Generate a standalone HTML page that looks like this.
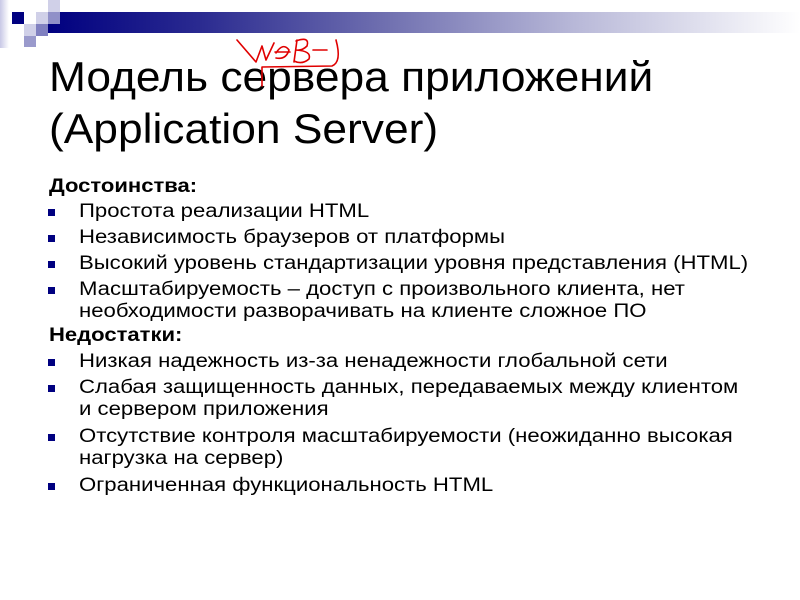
<!DOCTYPE html>
<html><head><meta charset="utf-8"><style>
html,body{margin:0;padding:0;width:800px;height:600px;background:#fff;overflow:hidden;position:relative;font-family:"Liberation Sans",Arial,sans-serif;}
.a{position:absolute;white-space:nowrap;color:#000;transform-origin:0 0;}
.t{font-size:42px;left:49px;line-height:48px;transform:scaleX(1.055);}
.b{font-size:19px;left:79px;line-height:22px;transform:scaleX(1.165);}
.h{font-size:19px;left:49px;font-weight:bold;line-height:22px;transform:scaleX(1.16);}
.sq{position:absolute;width:7px;height:7px;background:#000080;left:48px;}
</style></head><body>
<div style="position:absolute;left:0;top:0;width:9px;height:48px;background:linear-gradient(90deg,#c8c8e6,#fff)"></div>
<div style="position:absolute;left:48px;top:12px;width:752px;height:21px;background:linear-gradient(90deg,#000080 0%,#2a2a90 20%,#7070b0 45%,#b8b8d8 70%,#fff 100%)"></div>
<div style="position:absolute;left:12px;top:12px;width:12px;height:12px;background:#000080"></div>
<div style="position:absolute;left:36px;top:12px;width:12px;height:12px;background:#d0d0e8"></div>
<div style="position:absolute;left:48px;top:0;width:12px;height:12px;background:#d0d0e8"></div>
<div style="position:absolute;left:48px;top:12px;width:12px;height:12px;background:#9090c8"></div>
<div style="position:absolute;left:24px;top:24px;width:12px;height:12px;background:#d0d0e8"></div>
<div style="position:absolute;left:36px;top:24px;width:12px;height:12px;background:#8080c0"></div>
<div style="position:absolute;left:24px;top:36px;width:12px;height:11px;background:#9a9acc"></div>
<div class="a t" style="top:53px">Модель сервера приложений</div>
<div class="a t" style="top:105px">(Application Server)</div>
<svg style="position:absolute;left:0;top:0" width="800" height="600"><g fill="none" stroke="#e00000" stroke-width="1.6" stroke-linecap="round" stroke-linejoin="round">
<path d="M237 40 L256 62 L262 46 L266 60 L274 43"/>
<path d="M276 53 Q283 42 289 50 Q286 60 276 58 M275 52 L290 52"/>
<path d="M297 40 L294 62 M296 41 Q310 36 307 46 Q302 51 296 50 Q312 51 309 59 Q302 65 294 61"/>
<path d="M313 50 L327 50"/>
<path d="M336 40 Q342 62 332 66 L262 67 L262 86"/>
</g></svg>
<div class="a h" style="top:176px">Достоинства:</div>
<div class="sq" style="top:209px"></div><div class="a b" style="top:201px">Простота реализации HTML</div>
<div class="sq" style="top:235px"></div><div class="a b" style="top:227px">Независимость браузеров от платформы</div>
<div class="sq" style="top:261px"></div><div class="a b" style="top:253px">Высокий уровень стандартизации уровня представления (HTML)</div>
<div class="sq" style="top:287px"></div><div class="a b" style="top:279px">Масштабируемость – доступ с произвольного клиента, нет<br>необходимости разворачивать на клиенте сложное ПО</div>
<div class="a h" style="top:325px">Недостатки:</div>
<div class="sq" style="top:359px"></div><div class="a b" style="top:351px">Низкая надежность из-за ненадежности глобальной сети</div>
<div class="sq" style="top:385px"></div><div class="a b" style="top:377px">Слабая защищенность данных, передаваемых между клиентом<br>и сервером приложения</div>
<div class="sq" style="top:434px"></div><div class="a b" style="top:426px">Отсутствие контроля масштабируемости (неожиданно высокая<br>нагрузка на сервер)</div>
<div class="sq" style="top:483px"></div><div class="a b" style="top:475px">Ограниченная функциональность HTML</div>
</body></html>
